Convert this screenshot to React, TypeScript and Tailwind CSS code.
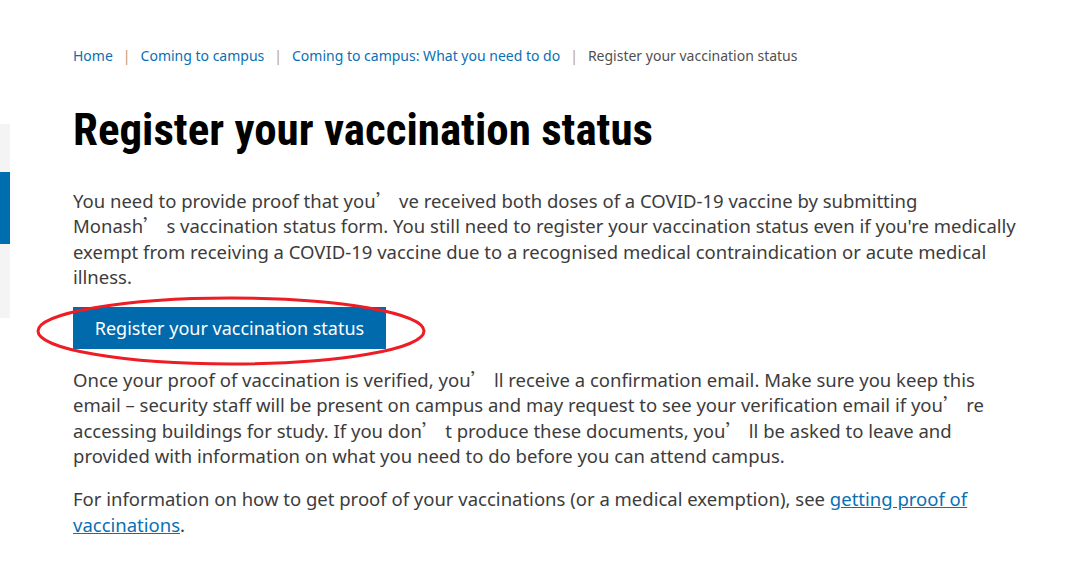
import React from 'react';

const crumbs = [
  { label: 'Home', href: '#' },
  { label: 'Coming to campus', href: '#' },
  { label: 'Coming to campus: What you need to do', href: '#' },
];

// full-width apostrophe, as rendered by the CJK fallback in the source page
function Q() {
  return <span className="font-['Noto_Sans_CJK_SC',sans-serif] leading-[0]">’</span>;
}

export default function App() {
  return (
    <div className="relative min-h-[569px] w-[1080px] bg-white font-['Noto_Sans','Open_Sans',sans-serif] text-[#3c3c3c]">
      {/* side nav stub */}
      <div className="absolute left-0 top-[124px] flex h-[194px] w-[10px] flex-col bg-[#f4f4f4]">
        <div className="mt-[48px] h-[72px] w-full bg-[#006dae]" />
      </div>

      <div className="pl-[73px] pt-[46px]">
        <nav className="flex items-center text-[14px] leading-5">
          {crumbs.map((c) => (
            <React.Fragment key={c.label}>
              <a href={c.href} className="text-[#0a6fb3]">
                {c.label}
              </a>
              <span className="mx-[10px] text-[#c49a6c]">|</span>
            </React.Fragment>
          ))}
          <span className="text-[#505050]">Register your vaccination status</span>
        </nav>

        <h1 className="mt-[38px] font-['Roboto_Condensed','Liberation_Sans_Narrow','DejaVu_Sans_Condensed',sans-serif] text-[45px] font-bold leading-[52px] text-black">
          Register your vaccination status
        </h1>

        <div className="mt-[32px] w-[980px] text-[18.5px] leading-[25.3px]">
          <p>
            You need to provide proof that you<Q /> ve received both doses of a COVID-19 vaccine by submitting
            <br />
            Monash<Q /> s vaccination status form. You still need to register your vaccination status even if
            you're medically
            <br />
            exempt from receiving a COVID-19 vaccine due to a recognised medical contraindication or acute medical
            <br />
            illness.
          </p>

          <a
            href="#"
            className="relative mt-[18px] inline-flex h-[42px] w-[313px] items-center justify-center bg-[#006aad] text-[18px] text-white"
          >
            Register your vaccination status
          </a>

          <p className="mt-[18px]">
            Once your proof of vaccination is verified, you<Q /> ll receive a confirmation email. Make sure you
            keep this
            <br />
            email – security staff will be present on campus and may request to see your verification email if
            you<Q /> re
            <br />
            accessing buildings for study. If you don<Q /> t produce these documents, you<Q /> ll be asked to leave
            and
            <br />
            provided with information on what you need to do before you can attend campus.
          </p>

          <p className="mt-[18px]">
            For information on how to get proof of your vaccinations (or a medical exemption), see{' '}
            <a href="#" className="text-[#0a6fb3] underline">
              getting proof of
              <br />
              vaccinations
            </a>
            .
          </p>
        </div>
      </div>

      {/* red annotation ring around the button */}
      <svg className="pointer-events-none absolute left-[35px] top-[295px]" width="394" height="74" viewBox="0 0 394 74">
        <ellipse cx="196" cy="36" rx="193" ry="33" fill="none" stroke="#ee1c24" strokeWidth="3" />
      </svg>
    </div>
  );
}
